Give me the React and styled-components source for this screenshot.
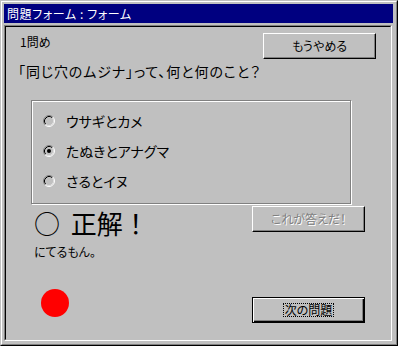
import React from "react";
import styled, { createGlobalStyle, css } from "styled-components";

const GlobalStyle = createGlobalStyle`
  html, body { margin: 0; padding: 0; background: #c0c0c0; }
  body { font-family: "Noto Sans CJK JP", "Noto Sans", sans-serif; }
  * { box-sizing: border-box; }
`;

const Window = styled.div`
  width: 398px;
  height: 346px;
  border: 1px solid;
  border-color: #c0c0c0 #000 #000 #c0c0c0;
  background: #c0c0c0;
`;

const WindowInner = styled.div`
  height: 100%;
  border: 1px solid;
  border-color: #fff #808080 #808080 #fff;
  padding: 2px 3px 2px 2px;
  display: flex;
  flex-direction: column;
`;

const Caption = styled.div`
  height: 19px;
  flex: none;
  background: #000080;
  color: #fff;
  font-size: 12px;
  line-height: 19px;
  padding-left: 3px;
  letter-spacing: 0.6px;
  white-space: nowrap;
  font-feature-settings: "palt";
`;

const ClientEdge = styled.div`
  flex: 1;
  margin: 2px 1px 1px 0;
  border: 1px solid;
  border-color: #808080 #fff #fff #808080;
  display: flex;
`;

const Client = styled.div`
  flex: 1;
  border: 1px solid;
  border-color: #000 #c0c0c0 #c0c0c0 #000;
  display: flex;
  flex-direction: column;
  color: #000;
  font-feature-settings: "palt";
`;

const TopRow = styled.div`
  display: flex;
  align-items: flex-start;
  padding: 6px 14px 0 14px;
`;

const Label = styled.div`
  font-size: ${(p) => p.$size || 12}px;
  line-height: ${(p) => p.$size || 12}px;
  letter-spacing: ${(p) => p.$spacing || 0}px;
  white-space: nowrap;
  margin-top: ${(p) => p.$top || 0}px;
  margin-left: ${(p) => p.$left || 0}px;
`;

const Button = styled.button`
  width: 113px;
  height: 26px;
  flex: none;
  padding: 0 0 1px 0;
  margin: ${(p) => p.$margin || 0};
  background: #c0c0c0;
  font-family: inherit;
  font-feature-settings: "palt";
  font-size: 12px;
  line-height: 12px;
  color: #000;
  border: 1px solid;
  border-color: #fff #000 #000 #fff;
  box-shadow: inset -1px -1px 0 #808080;
  display: flex;
  align-items: center;
  justify-content: center;
  ${(p) =>
    p.$isDefault &&
    css`
      border-color: #000;
      box-shadow: inset 1px 1px 0 #fff, inset -1px -1px 0 #000,
        inset -2px -2px 0 #808080;
    `}
  &:disabled {
    color: #808080;
    text-shadow: 1px 1px 0 #fff;
  }
`;

const FocusText = styled.span`
  border: 1px dotted #000;
  padding: 0 1px;
  line-height: 12px;
`;

const GroupBox = styled.div`
  width: 320px;
  height: 104px;
  margin: 22px 0 0 25px;
  border: 1px solid #808080;
  box-shadow: inset 1px 1px 0 #fff, 1px 1px 0 #fff;
  padding: 5px 0 0 11px;
  display: flex;
  flex-direction: column;
`;

const RadioRow = styled.label`
  height: 30px;
  display: flex;
  align-items: center;
  gap: 11px;
  font-size: 14px;
  line-height: 14px;
  white-space: nowrap;
`;

const RadioSvg = styled.svg`
  flex: none;
  display: block;
`;

const BottomArea = styled.div`
  display: flex;
  align-items: flex-start;
`;

const ResultCol = styled.div`
  display: flex;
  flex-direction: column;
  padding-left: 28px;
`;

const Heading = styled.div`
  font-size: 26px;
  line-height: 26px;
  margin-top: 6px;
  white-space: nowrap;
  word-spacing: 5px;
  font-feature-settings: normal;
`;

const RedDot = styled.div`
  width: 28px;
  height: 28px;
  border-radius: 50%;
  background: #ff0000;
  margin: 31px 0 0 7px;
`;

const ButtonCol = styled.div`
  display: flex;
  flex-direction: column;
  margin-left: auto;
  margin-right: 25px;
`;

function Radio({ checked }) {
  return (
    <RadioSvg width="12" height="12" viewBox="0 0 12 12">
      <circle cx="6" cy="6" r="4" fill="#c0c0c0" />
      <path d="M2.11 9.89 A5.5 5.5 0 0 1 9.89 2.11" fill="none" stroke="#808080" />
      <path d="M9.89 2.11 A5.5 5.5 0 0 1 2.11 9.89" fill="none" stroke="#fff" />
      <path d="M2.82 9.18 A4.5 4.5 0 0 1 9.18 2.82" fill="none" stroke="#000" />
      <path d="M9.18 2.82 A4.5 4.5 0 0 1 2.82 9.18" fill="none" stroke="#dfdfdf" />
      {checked && <circle cx="6" cy="6" r="2" fill="#000" />}
    </RadioSvg>
  );
}

const options = [
  { label: "ウサギとカメ", checked: false },
  { label: "たぬきとアナグマ", checked: true },
  { label: "さるとイヌ", checked: false },
];

export default function App() {
  return (
    <>
      <GlobalStyle />
      <Window>
        <WindowInner>
          <Caption>問題フォーム : フォーム</Caption>
          <ClientEdge>
            <Client>
              <TopRow>
                <Label $top={3}>1問め</Label>
                <Button $margin="0 0 0 auto">もうやめる</Button>
              </TopRow>
              <Label $size={14} $top={5} $left={12} $spacing={0.9}>
                「同じ穴のムジナ」って、何と何のこと？
              </Label>
              <GroupBox>
                {options.map((o) => (
                  <RadioRow key={o.label}>
                    <Radio checked={o.checked} />
                    {o.label}
                  </RadioRow>
                ))}
              </GroupBox>
              <BottomArea>
                <ResultCol>
                  <Heading>○ 正解！</Heading>
                  <Label $top={10}>にてるもん。</Label>
                  <RedDot />
                </ResultCol>
                <ButtonCol>
                  <Button disabled $margin="2px 0 0 0">
                    これが答えだ！
                  </Button>
                  <Button $isDefault $margin="65px 0 0 0">
                    <FocusText>次の問題</FocusText>
                  </Button>
                </ButtonCol>
              </BottomArea>
            </Client>
          </ClientEdge>
        </WindowInner>
      </Window>
    </>
  );
}
